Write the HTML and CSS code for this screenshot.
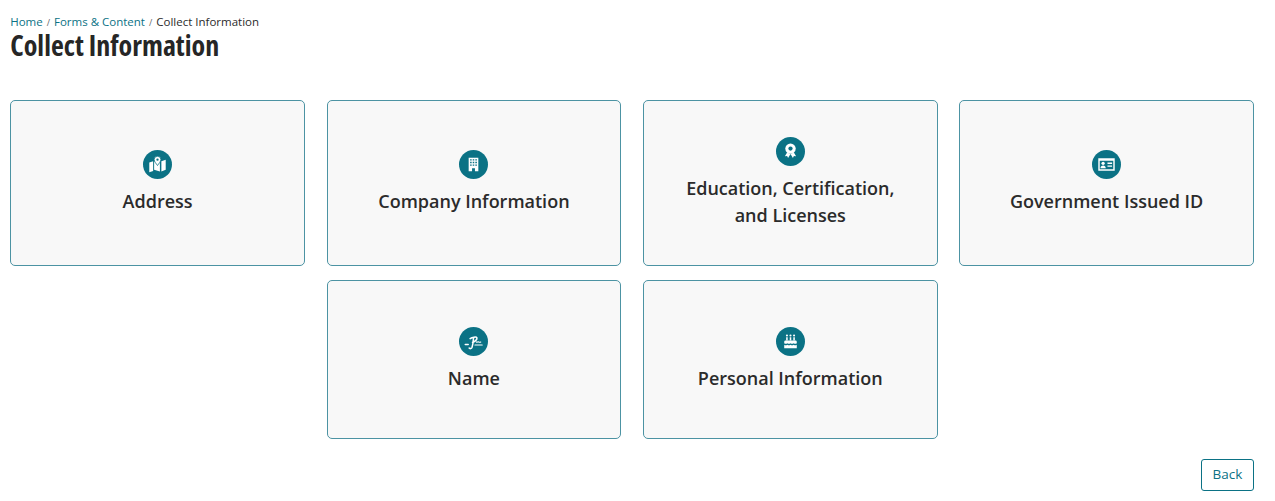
FILE: index.html
```html
<!doctype html>
<html lang="en">

<head>
    <meta charset="utf-8">
    <title>Collect Information</title>
    <link rel="stylesheet" href="styles.css">
</head>

<body>
    <div class="breadcrumb">
        <a href="#">Home</a><span class="sep">/</span><a href="#">Forms &amp; Content</a><span class="sep">/</span><span>Collect Information</span>
    </div>
    <h1 class="page-title">Collect Information</h1>

    <div class="card-grid">
        <a class="card" href="#">
            <svg class="card-icon" viewBox="0 0 30 30">
                <circle cx="15" cy="15" r="15" fill="#0b7285"/>
                <path fill="#fff" d="M6.500 13l4-1.400v10l-4 1.400zM11.500 11.600l2 .7 1.500 4 1.500-4 1-.3v10.200l-6-1.800zM19 11.600l4.500-1.500v10.400L19 22.200z"/>
                <path fill="#fff" stroke="#0b7285" stroke-width=".8" d="M15 6.500a3.500 3.500 0 0 1 3.500 3.500c0 1.600-2.300 4.500-3.500 6-1.200-1.500-3.500-4.400-3.500-6A3.500 3.500 0 0 1 15 6.500z"/>
                <circle cx="15" cy="10" r="1.200" fill="#0b7285"/>
            </svg>
            <span class="card-label">Address</span>
        </a>
        <a class="card" href="#">
            <svg class="card-icon" viewBox="0 0 30 30">
                <circle cx="15" cy="15" r="15" fill="#0b7285"/>
                <path fill="#fff" d="M10 8h10v14h-3.500v-3h-3v3H10z"/>
                <path fill="#0b7285" d="M11.500 9.500h1.600v1.400h-1.600zM14.200 9.500h1.600v1.400h-1.600zM16.900 9.500h1.600v1.400h-1.600zM11.500 12.200h1.600v1.400h-1.600zM14.200 12.200h1.600v1.400h-1.600zM16.900 12.200h1.600v1.400h-1.600zM11.500 14.900h1.600v1.400h-1.600zM14.200 14.900h1.600v1.400h-1.600zM16.900 14.900h1.600v1.400h-1.600z"/>
            </svg>
            <span class="card-label">Company Information</span>
        </a>
        <a class="card" href="#">
            <svg class="card-icon" viewBox="0 0 30 30">
                <circle cx="15" cy="15" r="15" fill="#0b7285"/>
                <path fill="#fff" d="M11.500 16l-2.300 3.800 2.300-.1 1 2 2.500-4.200zM18.500 16l2.300 3.800-2.300-.1-1 2-2.500-4.200z"/>
                <circle cx="15" cy="12" r="5.400" fill="#fff"/>
                <circle cx="15" cy="12" r="2.200" fill="#0b7285"/>
            </svg>
            <span class="card-label">Education, Certification,<br>and Licenses</span>
        </a>
        <a class="card" href="#">
            <svg class="card-icon" viewBox="0 0 30 30">
                <circle cx="15" cy="15" r="15" fill="#0b7285"/>
                <path fill="#fff" fill-rule="evenodd" d="M6.500 8.500h17v13h-17zM8 11v9h14v-9z"/>
                <circle cx="11.500" cy="13.800" r="1.700" fill="#fff"/>
                <path fill="#fff" d="M8.800 18.800c0-1.800 1.200-2.800 2.700-2.800s2.700 1 2.700 2.800zM16 13h4.800v1.400H16zM16 16h4.800v1.400H16z"/>
            </svg>
            <span class="card-label">Government Issued ID</span>
        </a>
        <a class="card card-col2" href="#">
            <svg class="card-icon" viewBox="0 0 30 30">
                <circle cx="15" cy="15" r="15" fill="#0b7285"/>
                <path fill="none" stroke="#fff" stroke-width="1.600" stroke-linecap="round" d="M6.500 18h3M11.500 12c2-1.500 6.500-2.200 7-.8.4 1.500-2.500 3.800-4.500 4.800M15 11.500c-.3 3.500-.5 6.500-1.500 9.500-.6 1.500-2.300 1.700-3 .8"/>
                <path fill="none" stroke="#fff" stroke-width="1.200" stroke-linecap="round" d="M18 15.500c1 .6 1.500-.4 2.500 0s1.300.4 2 0M16.500 18.600h7.500"/>
            </svg>
            <span class="card-label">Name</span>
        </a>
        <a class="card" href="#">
            <svg class="card-icon" viewBox="0 0 30 30">
                <circle cx="15" cy="15" r="15" fill="#0b7285"/>
                <path fill="#fff" d="M8.500 15.500c0-1 .7-1.500 1.500-1.500h10c.8 0 1.500.5 1.500 1.500v1.300c-1 .8-2.200.8-3.200 0-1 .8-2.300.8-3.300 0-1 .8-2.300.8-3.300 0-1 .8-2.200.8-3.200 0zM8.500 18.300c1 .8 2.200.8 3.200 0 1 .8 2.300.8 3.300 0 1 .8 2.300.8 3.300 0 1 .8 2.200.8 3.200 0V22h-13z"/>
                <path fill="#fff" d="M10.500 10.500h1.600V14h-1.600zM14.200 10.500h1.600V14h-1.600zM17.900 10.500h1.600V14h-1.600z"/>
                <circle cx="11.300" cy="8.800" r="1.100" fill="#fff"/>
                <circle cx="15" cy="8.800" r="1.100" fill="#fff"/>
                <circle cx="18.700" cy="8.800" r="1.100" fill="#fff"/>
            </svg>
            <span class="card-label">Personal Information</span>
        </a>
    </div>

    <div class="actions">
        <button class="back-button">Back</button>
    </div>
</body>
</html>
```

FILE: styles.css
```css
body {
    margin: 0;
    padding: 14px 21px 0 10.200px;
    font-family: "Open Sans", sans-serif;
    color: #2b2b2b;
    background: #fff;
}
.breadcrumb {
    height: 16px;
    font-size: 11.500px;
    line-height: 16px;
}
.breadcrumb a {
    color: #0b7285;
    text-decoration: none;
}
.breadcrumb .sep {
    margin: 0 4px;
    font-size: 9px;
    color: #666;
}
.page-title {
    margin: 0;
    font-family: "Open Sans", sans-serif;
    font-stretch: 75%;
    font-size: 28px;
    line-height: 30px;
    font-weight: 700;
    color: #262626;
}
.card-grid {
    display: grid;
    grid-template-columns: repeat(4, 1fr);
    column-gap: 21.600px;
    row-gap: 14px;
    margin-top: 39.600px;
}
.card {
    display: flex;
    flex-direction: column;
    align-items: center;
    justify-content: center;
    gap: 9px;
    min-height: 159px;
    padding: 36px 10px;
    box-sizing: border-box;
    background: #f8f8f8;
    border: 1px solid #4c93a3;
    border-radius: 5px;
    text-decoration: none;
    color: #2b2b2b;
}
.card-col2 {
    grid-column: 2;
}
.card-icon {
    width: 29px;
    height: 29px;
}
.card-label {
    font-size: 18px;
    line-height: 27px;
    font-weight: 600;
    text-align: center;
}
.actions {
    display: flex;
    justify-content: flex-end;
    margin-top: 20px;
}
.back-button {
    width: 53px;
    height: 32px;
    padding: 0 0 1px;
    font-family: "Open Sans", sans-serif;
    font-size: 13.500px;
    font-weight: 500;
    color: #0b7285;
    background: #fff;
    border: 1px solid #0b7285;
    border-radius: 3px;
}
```
